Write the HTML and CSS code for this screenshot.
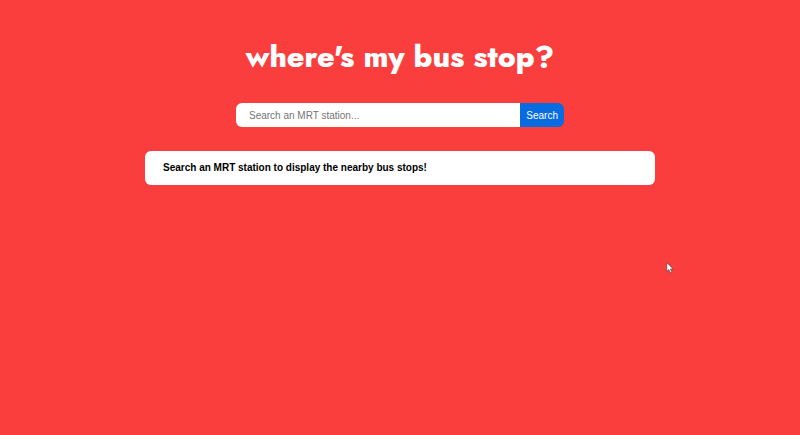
FILE: index.html
```html
<!DOCTYPE html>
<html lang="en">
<head>
<meta charset="utf-8">
<meta name="viewport" content="width=device-width, initial-scale=1">
<title>where's my bus stop?</title>
<link rel="stylesheet" href="styles.css">
</head>
<body>
<main class="page">
  <h1 class="title">where's my bus stop?</h1>
  <form class="search">
    <input class="search-input" type="text" aria-label="Search an MRT station" placeholder="Search an MRT station...">
    <button class="search-button" type="button">Search</button>
  </form>
  <section class="results">
    <p class="message">Search an MRT station to display the nearby bus stops!</p>
  </section>
</main>
<svg class="cursor" viewBox="0 0 12 19" aria-hidden="true"><path d="M1 1V15L4.300 12L6.500 17L9 16L6.800 11H11Z"/></svg>
</body>
</html>
```
FILE: styles.css
```css
* {
  box-sizing: border-box;
}

body {
  margin: 0;
  min-height: 100vh;
  background: #fa3e3e;
  font-family: "Liberation Sans", Arial, sans-serif;
}

.page {
  display: flex;
  flex-direction: column;
  align-items: center;
  gap: 24px;
  padding-top: 35px;
}

.title {
  margin: 0;
  color: #fff;
  font-family: Jost, Futura, Lato, sans-serif;
  font-size: 30px;
  font-weight: 800;
  line-height: 44px;
}

.search {
  display: flex;
  width: 41%;
  height: 24px;
}

.search-input {
  flex: 1;
  min-width: 0;
  padding: 0 13px;
  border: 0;
  border-radius: 6px 0 0 6px;
  background: #fff;
  font: 10px "Liberation Sans", Arial, sans-serif;
}

.search-input::placeholder {
  color: #757575;
}

.search-button {
  padding: 0 6px;
  border: 0;
  border-radius: 0 6px 6px 0;
  background: #086ce0;
  color: #fff;
  font: 10px "Liberation Sans", Arial, sans-serif;
}

.results {
  width: 64%;
  max-width: 510px;
  padding: 9px 18px;
  border-radius: 6px;
  background: #fff;
}

.message {
  margin: 0;
  color: #000;
  font-size: 10px;
  font-weight: 700;
  line-height: 16px;
}

.cursor {
  position: absolute;
  top: 262px;
  left: 666px;
  width: 8px;
  height: 12px;
  fill: #fff;
  stroke: #444;
}
```
